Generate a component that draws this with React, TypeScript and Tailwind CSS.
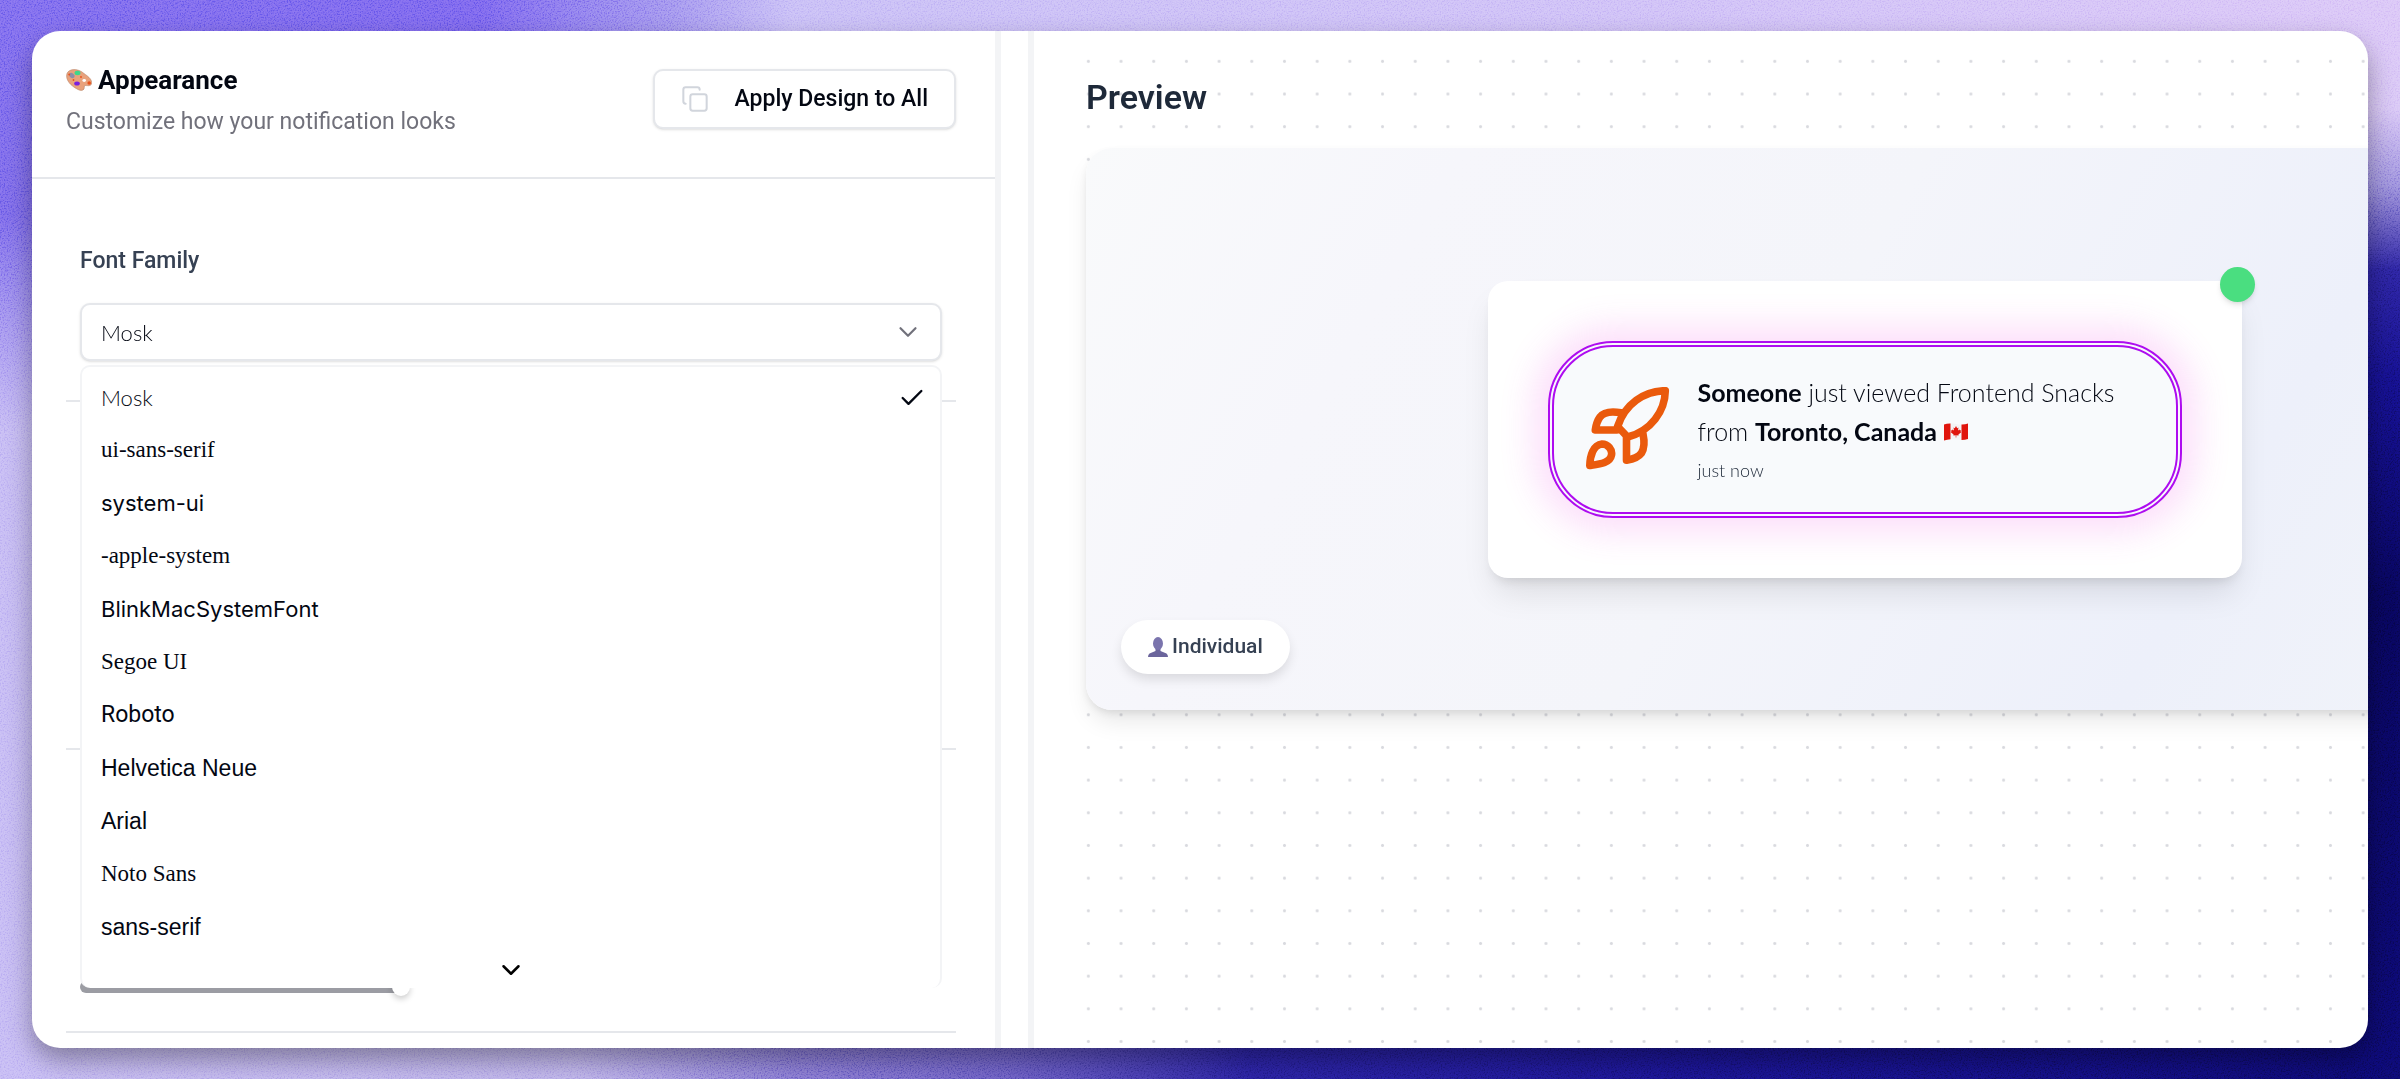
import { Check, ChevronDown, Copy } from "lucide-react";
import { useState } from "react";

const FONTS = [
  { name: "Mosk", className: "font-['Lato',sans-serif] text-[22px] font-light" },
  { name: "ui-sans-serif", className: "font-['Liberation_Serif',serif] text-[23px]" },
  { name: "system-ui", className: "font-['Inter',sans-serif] text-[22px]" },
  { name: "-apple-system", className: "font-['Liberation_Serif',serif] text-[23px]" },
  { name: "BlinkMacSystemFont", className: "font-['Inter',sans-serif] text-[22px]" },
  { name: "Segoe UI", className: "font-['Liberation_Serif',serif] text-[23px]" },
  { name: "Roboto", className: "font-['Roboto',sans-serif] text-[23px]" },
  { name: "Helvetica Neue", className: "font-['Liberation_Sans',sans-serif] text-[23px]" },
  { name: "Arial", className: "font-['Liberation_Sans',sans-serif] text-[23px]" },
  { name: "Noto Sans", className: "font-['Liberation_Serif',serif] text-[23px]" },
  { name: "sans-serif", className: "font-['Liberation_Sans',sans-serif] text-[23px]" },
];

function PaletteIcon() {
  return (
    <svg viewBox="0 0 26 22" className="h-[22px] w-[26px]" aria-hidden="true">
      <path
        d="M1 4.500C3-0.500 12-1 18 4.500C23 8 26.500 11 25.500 15C24.500 17.500 21 16.500 19.500 16.500C18 16.500 18.500 18 18 20C17 22 14 21.500 12 20.500C5 17 -1 11 1 4.500Z"
        fill="#e9a27c"
        stroke="#b98468"
        strokeWidth="0.600"
      />
      <ellipse cx="18.200" cy="11.500" rx="1.800" ry="1.400" fill="#fff" />
      <ellipse cx="11.500" cy="4" rx="3" ry="2.200" fill="#3fd68a" />
      <ellipse cx="5.800" cy="6.500" rx="3" ry="2.200" fill="#8f8ba8" transform="rotate(40 5.800 6.500)" />
      <circle cx="3.200" cy="5.500" r="1" fill="#e8521c" />
      <circle cx="15" cy="8" r="0.900" fill="#e8521c" />
      <circle cx="7.500" cy="11" r="0.900" fill="#e8521c" />
      <ellipse cx="11" cy="14.500" rx="2.800" ry="2" fill="#7a1fe0" />
      <ellipse cx="23.200" cy="14" rx="1.800" ry="1.800" fill="#e8521c" />
    </svg>
  );
}

function PersonIcon() {
  return (
    <svg viewBox="0 0 20 20" className="h-5 w-5" aria-hidden="true">
      <path d="M7.500 10h5v4l6 2.500q1.500 1 1.500 3.500H0q0-2.500 1.500-3.500l6-2.500Z" fill="#6b659c" />
      <ellipse cx="10" cy="6.500" rx="5" ry="6.500" fill="#7a74ad" />
    </svg>
  );
}

function CanadaFlag() {
  return (
    <svg viewBox="0 0 24 18" className="inline-block h-[18px] w-6 align-baseline" aria-label="Canada">
      <path d="M0 1.500Q6-0.500 12 1T24 0.500V16Q18 17.500 12 16.500T0 17.500Z" fill="#f3f3f5" />
      <path d="M0 1.500Q3 0.300 6.500 0.400V16.300Q3 16.500 0 17.500Z" fill="#e0150d" />
      <path d="M17.500 1.400Q21 1.500 24 0.500V16Q21 17 17.500 17Z" fill="#e0150d" />
      <path
        d="m12 3 1.200 2.200 1.300-.6-.5 3 1.600-1.200.4 1 1.200-.2-.6 1.600.6.500-2.800 2.300.2 1-2.300-.3V14.500h-.6v-2.200l-2.300.3.200-1-2.800-2.300.6-.5-.6-1.600 1.200.2.400-1L10 7.600l-.5-3 1.300.6Z"
        fill="#e0150d"
      />
    </svg>
  );
}

function RocketIcon() {
  return (
    <svg
      viewBox="0 0 84 84"
      className="h-[84px] w-[84px] shrink-0"
      fill="none"
      stroke="#ea5a0c"
      strokeWidth="7.6"
      strokeLinecap="round"
      strokeLinejoin="round"
      aria-hidden="true"
    >
      <path d="M79.300 3.700C58 4 39 17 31.600 39.500L41.600 50C65 44 79 24 79.300 3.700Z" />
      <path d="M35 25.700C25 24 18 24.500 14 30C11 34 10 38 9.300 43H31" />
      <path d="M40.500 51V73.300C48 72 53 69.500 55.500 66C58.500 61 58.500 54 57 47" />
      <path d="M3.800 78.500C4 69 7 58 16 57C22 57 26.500 62.500 25.500 68C24 76 14 77 3.800 78.500Z" />
    </svg>
  );
}

function Grain() {
  return (
    <svg className="pointer-events-none absolute inset-0 h-full w-full opacity-15 mix-blend-overlay" aria-hidden="true">
      <filter id="grain">
        <feTurbulence type="fractalNoise" baseFrequency="0.7" numOctaves="2" />
        <feColorMatrix type="matrix" values="3 0 0 0 -1  3 0 0 0 -1  3 0 0 0 -1  0 0 0 0 1" />
      </filter>
      <rect width="100%" height="100%" filter="url(#grain)" />
    </svg>
  );
}

function FontSelect() {
  const [font, setFont] = useState("Mosk");

  return (
    <div className="relative">
      <div className="relative">
        <select
          id="font-family"
          value={font}
          onChange={(e) => setFont(e.target.value)}
          className="h-[58px] w-full appearance-none rounded-[10px] border-2 border-[#e5e7eb] bg-white px-[19px] font-['Lato',sans-serif] text-[22px] font-light text-gray-950 shadow-sm outline-none"
        >
          {FONTS.map((f) => (
            <option key={f.name}>{f.name}</option>
          ))}
        </select>
        <ChevronDown
          size={30}
          strokeWidth={1.75}
          className="pointer-events-none absolute top-[14px] right-[19px] text-zinc-500"
        />
      </div>

      {/* Open menu */}
      <div className="absolute top-full right-0 left-0 z-10 mt-1 rounded-[10px] border-2 border-b-0 border-gray-100 bg-white pt-1 pb-[3px]">
        <ul role="listbox" aria-label="Font family">
          {FONTS.map((f) => (
            <li
              key={f.name}
              role="option"
              aria-selected={f.name === font}
              onClick={() => setFont(f.name)}
              className={`flex h-[53px] cursor-default items-center justify-between pr-[14px] pl-[19px] text-gray-950 ${f.className}`}
            >
              {f.name}
              {f.name === font && <Check size={28} strokeWidth={2} />}
            </li>
          ))}
        </ul>
        <button type="button" aria-label="Scroll down" className="flex h-[31px] w-full items-center justify-center">
          <ChevronDown size={30} strokeWidth={2} />
        </button>
      </div>
    </div>
  );
}

function AppearancePanel() {
  const [size, setSize] = useState(37);

  return (
    <section className="flex w-[963px] shrink-0 flex-col">
      <header className="flex h-[148px] items-start justify-between border-b-2 border-[#e5e7eb] pt-[31px] pr-[39px] pl-[34px]">
        <div>
          <h1 className="flex items-center gap-[6px] text-[26px] leading-[36px] font-bold text-gray-950">
            <PaletteIcon />
            Appearance
          </h1>
          <p className="mt-1 text-[23px] leading-[40px] text-zinc-500">Customize how your notification looks</p>
        </div>
        <button
          type="button"
          className="mt-[7px] flex h-[60px] items-center gap-[26px] rounded-[10px] border-2 border-[#e5e7eb] bg-white px-[26px] text-[23px] font-medium text-gray-950 shadow-sm"
        >
          <Copy size={28} strokeWidth={1.75} className="text-gray-300" />
          Apply Design to All
        </button>
      </header>

      <div className="flex flex-1 flex-col pr-[39px] pl-[34px]">
        <div className="h-[221px] px-[14px] pt-[64px]">
          <label htmlFor="font-family" className="mb-6 block text-[23px] leading-[36px] font-medium text-gray-700">
            Font Family
          </label>
          <FontSelect />
        </div>
        <hr className="border-t-2 border-[#e5e7eb]" />
        <div className="h-[346px]" />
        <hr className="border-t-2 border-[#e5e7eb]" />
        <div className="flex h-[281px] flex-col justify-end px-[14px] pb-[38px]">
          <input
            type="range"
            aria-label="Font size"
            value={size}
            onChange={(e) => setSize(Number(e.target.value))}
            className="h-3 w-full appearance-none rounded-full bg-linear-to-r from-[#9b9ca3] from-37% to-white to-37% [&::-webkit-slider-thumb]:h-[18px] [&::-webkit-slider-thumb]:w-[18px] [&::-webkit-slider-thumb]:appearance-none [&::-webkit-slider-thumb]:rounded-full [&::-webkit-slider-thumb]:bg-white [&::-webkit-slider-thumb]:shadow-[0_3px_6px_rgba(0,0,0,0.2)]"
          />
        </div>
        <hr className="border-t-2 border-[#e5e7eb]" />
      </div>
    </section>
  );
}

function Notification() {
  return (
    <div className="flex h-[177px] w-[634px] items-center gap-[28px] rounded-[65px] border-6 border-double border-[#ae0cf0] bg-slate-50 pl-8 font-['Lato',sans-serif] shadow-[0_0_34px_14px_rgba(240,70,225,0.18)]">
      <RocketIcon />
      <div className="pt-1 text-[25px] leading-[39px] font-light text-gray-950">
        <p>
          <strong className="font-bold">Someone</strong> just viewed Frontend Snacks
        </p>
        <p>
          from <strong className="font-bold">Toronto, Canada</strong> <CanadaFlag />
        </p>
        <p className="text-[18px] text-gray-800">just now</p>
      </div>
    </div>
  );
}

function PreviewPanel() {
  return (
    <section className="min-w-0 flex-1 overflow-hidden pl-[38px]">
      {/* Dotted canvas */}
      <div className="mt-[14px] -mr-[12px] h-[1013px] bg-[radial-gradient(circle_at_center,#d9dadf_1px,transparent_2px)] bg-[length:33px_33px] bg-repeat-round pt-[32px] pl-[14px]">
        <h2 className="text-[34px] leading-[40px] font-semibold text-gray-800">Preview</h2>
        <div className="relative mt-[31px] -mr-[263px] flex h-[562px] items-center justify-center rounded-[26px] bg-[linear-gradient(120deg,#f9fafb_0%,#f6f6fb_20%,#f4f5fa_45%,#edf0fa_72%,#f3f5f9_100%)] shadow-[0_14px_24px_-4px_rgba(0,0,0,0.1),0_4px_8px_-2px_rgba(0,0,0,0.1)]">
          <div className="relative rounded-[20px] bg-white p-[60px] shadow-[0_20px_32px_-6px_rgba(0,0,0,0.1),0_8px_12px_-6px_rgba(0,0,0,0.12)]">
            <Notification />
            <span className="absolute -top-[14px] -right-[13px] h-[35px] w-[35px] rounded-full bg-[#4ade80] shadow-md" />
          </div>
          <div className="absolute bottom-[36px] left-[35px] flex h-[54px] items-center gap-1 rounded-full bg-white px-[27px] text-[21px] font-medium text-gray-700 shadow-[0_6px_12px_-1px_rgba(0,0,0,0.12)]">
            <PersonIcon />
            Individual
          </div>
        </div>
      </div>
    </section>
  );
}

export default function App() {
  return (
    <main className="relative flex h-screen bg-[linear-gradient(90deg,#7e6cee_0%,#7b66ee_20%,#a295ee_28%,#c8bef6_33%,#cfc0f7_70%,#dac6f7_100%),linear-gradient(180deg,#7e6cee_0%,#7b69ea_20%,#a394ef_30%,#c5baf4_40%,#c5baf4_100%),linear-gradient(180deg,#dac6f7_0%,#d8c6f6_10%,#9c90dd_17%,#2c249f_25%,#15108a_35%,#08065a_55%,#0d0a70_100%),linear-gradient(90deg,#c5baf4_0%,#bdb2ec_24%,#8678d4_33%,#6a5dc4_42%,#2a22a0_52%,#1a148e_70%,#0d0a70_100%)] bg-[length:100%_60px,60px_100%,60px_100%,100%_100%] bg-[position:top,left,right,center] bg-no-repeat px-8 py-[31px] font-['Roboto',sans-serif]">
      <Grain />
      <div className="relative flex flex-1 overflow-hidden rounded-[28px] bg-white shadow-[0_12px_26px_rgba(0,0,0,0.35)]">
        <AppearancePanel />
        <div className="w-[39px] shrink-0 border-x-6 border-gray-100" />
        <PreviewPanel />
      </div>
    </main>
  );
}
